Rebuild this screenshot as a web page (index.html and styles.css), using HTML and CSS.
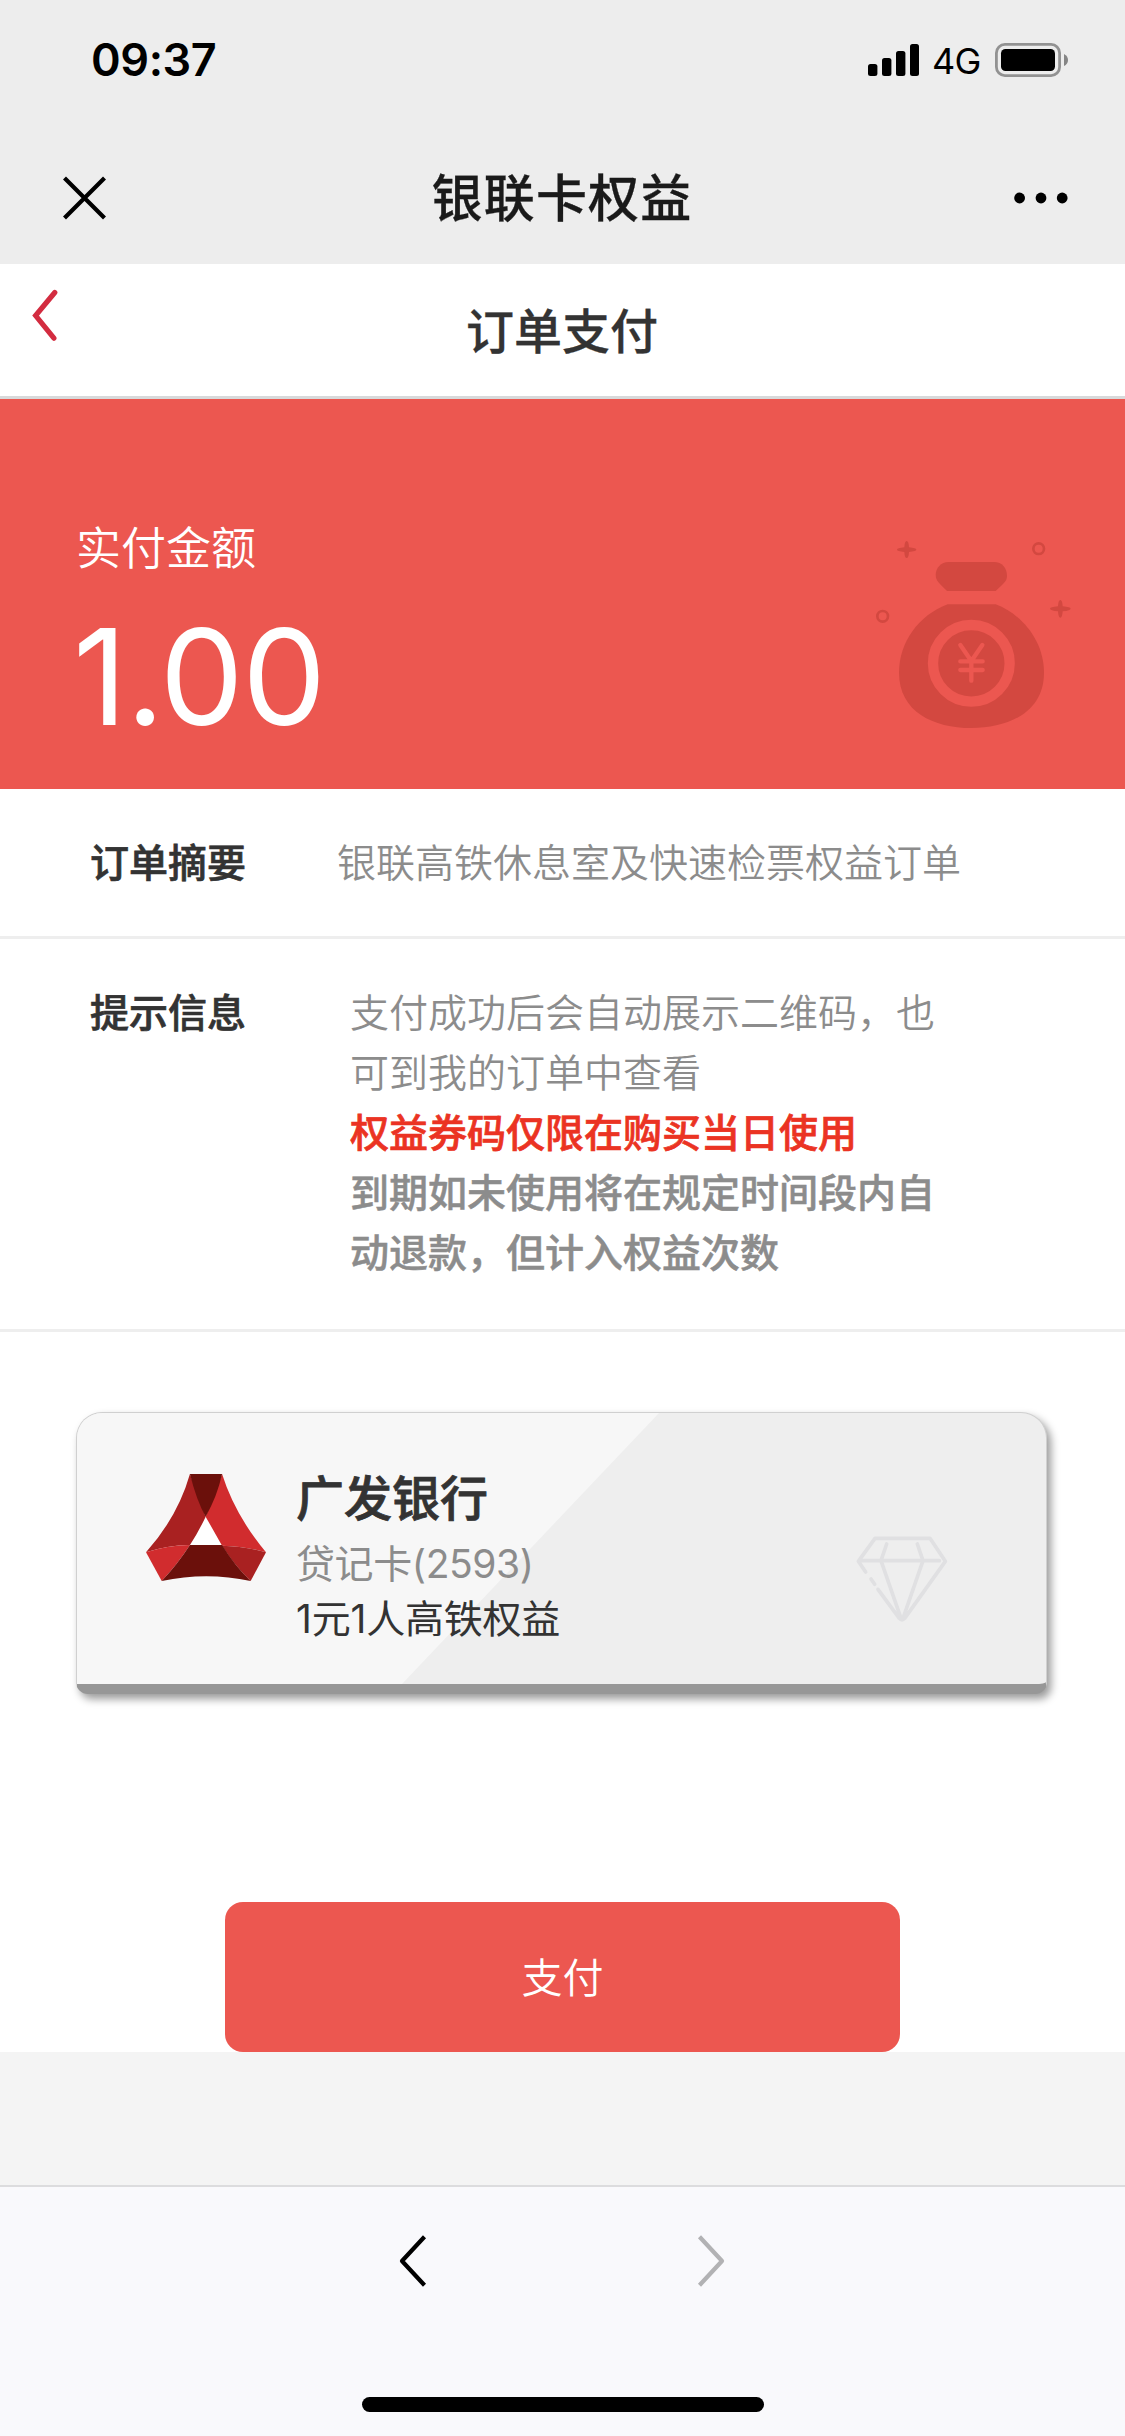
FILE: index.html
```html
<!DOCTYPE html>
<html lang="zh-CN">
<head>
<meta charset="utf-8">
<meta name="viewport" content="width=device-width, initial-scale=1">
<title>银联卡权益</title>
<link rel="stylesheet" href="styles.css">
</head>
<body>
<div class="screen">
  <header class="topbar">
    <div class="status">
      <span class="time">09:37</span>
      <div class="status-right">
        <svg class="signal" width="51" height="32" viewBox="0 0 51 32"><rect x="0" y="20" width="9.4" height="12" rx="2.5"/><rect x="14" y="14" width="9.4" height="18" rx="2.5"/><rect x="28" y="7" width="9.4" height="25" rx="2.5"/><rect x="42" y="0" width="9" height="32" rx="2.5"/></svg>
        <span class="network">4G</span>
        <svg class="battery" width="74" height="34" viewBox="0 0 74 34"><rect x="1.4" y="1.4" width="63.2" height="31.2" rx="8.5" fill="none" stroke="#929292" stroke-width="2.8"/><rect x="6" y="6" width="54" height="22" rx="4.5"/><path d="M69 11q4 2 4 6t-4 6z" fill="#858585"/></svg>
      </div>
    </div>
    <div class="navbar">
      <svg class="close" width="44" height="44" viewBox="0 0 44 44"><path d="M2.5 2l40 40M42.5 2l-40 40" stroke="#000" stroke-width="4.2"/></svg>
      <h1 class="app-title">银联卡权益</h1>
      <svg class="more" width="54" height="12" viewBox="0 0 54 12"><circle cx="5.6" cy="6" r="5.4"/><circle cx="27" cy="6" r="5.4"/><circle cx="48.2" cy="6" r="5.4"/></svg>
    </div>
  </header>

  <div class="page-head">
    <svg class="back" width="26" height="53" viewBox="0 0 26 53"><path d="M22.8 3.5L3.6 26.6l18.3 22.6" fill="none" stroke="#d32c40" stroke-width="5.2" stroke-linecap="round"/></svg>
    <h2 class="page-title">订单支付</h2>
  </div>

  <section class="amount">
    <div class="amount-text">
      <div class="amount-label">实付金额</div>
      <div class="amount-value">1.00</div>
    </div>
    <svg class="bag" width="240" height="240" viewBox="0 0 720 720" fill="#d34840">
      <path d="M296 156H432C456 156 471 174 471 198C471 210 464 217 456 225L437 243H291L272 224C263 215 257 208 257 195C257 174 273 156 296 156Z"/>
      <path d="M293 283H437C520 315 582 396 582 488C582 605 478 654 364 654C250 654 147 605 147 488C147 396 207 315 293 283Z"/>
      <circle cx="364" cy="460" r="115" fill="none" stroke="#ec5750" stroke-width="31"/>
      <path d="M331 405L364 453L397 405M331 454H398M331 480H398M364 454V512" fill="none" stroke="#ec5750" stroke-width="13" stroke-linecap="round" stroke-linejoin="round"/>
      <circle cx="566" cy="116" r="16" fill="none" stroke="#d34840" stroke-width="8"/>
      <circle cx="98" cy="319" r="16" fill="none" stroke="#d34840" stroke-width="8"/>
      <path d="M170 93Q176 93 177 112Q199 114 199 119Q199 123 177 126Q176 144 170 144Q164 144 163 126Q141 123 141 119Q141 114 163 112Q164 93 170 93Z"/>
      <path d="M631 270Q637 270 638 289Q662 291 662 296Q662 301 638 304Q637 323 631 323Q625 323 624 304Q600 301 600 296Q600 291 624 289Q625 270 631 270Z"/>
    </svg>
  </section>

  <section class="row summary">
    <div class="row-label">订单摘要</div>
    <div class="row-text">银联高铁休息室及快速检票权益订单</div>
  </section>

  <section class="row notice">
    <div class="row-label">提示信息</div>
    <div class="row-text">
      <p>支付成功后会自动展示二维码，也可到我的订单中查看</p>
      <p class="warn">权益券码仅限在购买当日使用</p>
      <p class="strong">到期如未使用将在规定时间段内自动退款，但计入权益次数</p>
    </div>
  </section>

  <section class="pay">
    <div class="card">
      <svg class="bank-logo" width="120" height="107" viewBox="241 252 336 321" preserveAspectRatio="none">
        <path d="M408 380L364 466H454Z" fill="#fff"/>
        <path d="M364 252Q330 380 241 487Q300 466 364 465Q388 426 408 380Z" fill="#a92121"/>
        <path d="M454 252Q490 375 577 487Q520 469 454 467L408 380Z" fill="#d12c2e"/>
        <path d="M364 252H454Q440 320 408 380Q382 330 364 252Z" fill="#6b100b"/>
        <path d="M241 487Q300 466 364 465Q330 522 285 573Z" fill="#d12c2e"/>
        <path d="M577 487L534 573Q490 528 454 467Q520 469 577 487Z" fill="#a92121"/>
        <path d="M364 465H454Q490 528 534 573Q410 545 285 573Q330 522 364 465Z" fill="#6b100b"/>
      </svg>
      <div class="card-info">
        <div class="bank-name">广发银行</div>
        <div class="card-type">贷记卡(2593)</div>
        <div class="card-benefit">1元1人高铁权益</div>
      </div>
      <svg class="diamond" width="96" height="90" viewBox="760 430 288 270" fill="none" stroke="#e0e0e2" stroke-width="11" stroke-linecap="round" stroke-linejoin="round">
        <path d="M795 544L773 512L823 443H988L1034 512L912 683Q904 692 896 683L832 596M811 565L822 581M778 510H1016M858 460L841 510L901 683M950 460L967 510L907 683"/>
      </svg>
    </div>
    <button class="pay-button" type="button">支付</button>
  </section>

  <div class="filler"></div>

  <footer class="toolbar">
    <div class="toolbar-nav">
      <svg width="28" height="52" viewBox="0 0 28 52"><path d="M25.5 1.8L3 26l22.5 24.2" fill="none" stroke="#000" stroke-width="4.2" stroke-linejoin="round"/></svg>
      <svg width="28" height="52" viewBox="0 0 28 52"><path d="M2.5 1.8L25 26 2.5 50.2" fill="none" stroke="#b2b2b4" stroke-width="4.2" stroke-linejoin="round"/></svg>
    </div>
    <div class="home-indicator"></div>
  </footer>
</div>
</body>
</html>
```
FILE: styles.css
```css
* {
  box-sizing: border-box;
  margin: 0;
  padding: 0;
}

body {
  background: #fff;
  color: #333;
  font-family: "Noto Sans CJK SC", sans-serif;
}

svg {
  display: block;
  flex: none;
}

.screen {
  width: 1125px;
  height: 2436px;
  display: flex;
  flex-direction: column;
  overflow: hidden;
}

/* Status bar and app navigation */
.topbar {
  height: 264px;
  background: #ededed;
  color: #000;
}

.status {
  height: 132px;
  padding: 0 56px 12px 91px;
  display: flex;
  align-items: center;
  justify-content: space-between;
  font-family: Inter, sans-serif;
}

.time {
  font-size: 45px;
  font-weight: 600;
  line-height: 54px;
  letter-spacing: -0.4px;
}

.status-right {
  display: flex;
  align-items: center;
}

.network {
  width: 76px;
  padding: 2px 0 0 13px;
  font-size: 36px;
  line-height: 40px;
  letter-spacing: -0.8px;
}

.navbar {
  height: 132px;
  padding: 0 57px 0 62px;
  display: grid;
  grid-template-columns: 1fr auto 1fr;
  align-items: center;
}

.more {
  justify-self: end;
}

.app-title {
  margin-right: 6px;
  padding-bottom: 6px;
  font-size: 51px;
  font-weight: 500;
  line-height: 60px;
  letter-spacing: 1.2px;
  color: #1a1a1a;
  -webkit-text-stroke: 0.3px;
}

/* Page heading */
.page-head {
  height: 135px;
  padding: 25px 32px 0;
  border-bottom: 3px solid #d8d9da;
  display: grid;
  grid-template-columns: 1fr auto 1fr;
  align-items: start;
}

.page-title {
  margin-right: 1px;
  padding-top: 9px;
  font-size: 48px;
  font-weight: 500;
  line-height: 60px;
  -webkit-text-stroke: 0.3px;
}

/* Amount banner */
.amount {
  height: 390px;
  padding: 111px 35px 0 76px;
  background: #ec5750;
  color: #fff;
  display: flex;
  justify-content: space-between;
}

.amount-label {
  padding-top: 6px;
  font-size: 45px;
  font-weight: 350;
  line-height: 60px;
}

.amount-value {
  font-family: Inter, sans-serif;
  font-size: 133px;
  font-weight: 400;
  line-height: 140px;
  letter-spacing: -1.2px;
  margin: 31px 0 0 -3px;
}

/* Order rows */
.row {
  padding-left: 90px;
  border-bottom: 3px solid #eee;
  display: flex;
  font-size: 39px;
  line-height: 60px;
}

.row-label {
  font-weight: 500;
  -webkit-text-stroke: 0.7px;
}

.row-text {
  color: #8c8c8c;
  font-weight: 350;
}

.summary {
  height: 150px;
  padding-top: 41px;
  gap: 91px;
}

.notice {
  height: 393px;
  padding-top: 41px;
  gap: 104px;
}

.notice .row-text {
  width: 590px;
}

.notice .warn {
  color: #eb3323;
  font-weight: 500;
  -webkit-text-stroke: 0.7px;
}

.notice .strong {
  font-weight: 500;
  -webkit-text-stroke: 0.5px;
}

/* Bank card */
.pay {
  height: 720px;
  padding-top: 80px;
  display: flex;
  flex-direction: column;
  align-items: center;
  justify-content: space-between;
}

.card {
  position: relative;
  width: 971px;
  height: 282px;
  margin-left: -2px;
  padding: 61px 96px 0 69px;
  border: 1px solid #d0d0d0;
  border-bottom: 10px solid #979797;
  border-radius: 26px 26px 12px 12px;
  background: #eee;
  box-shadow: 4px 5px 8px rgba(0, 0, 0, 0.4);
  display: flex;
  align-items: flex-start;
}

.card::before {
  content: "";
  position: absolute;
  inset: 0;
  border-radius: 25px 0 0 0;
  background: #f7f7f7;
  clip-path: polygon(0 0, 582px 0, 325px 100%, 0 100%);
}

.card > * {
  position: relative;
}

.card-info {
  flex: 1;
  padding-left: 30px;
  margin-top: -5px;
  font-family: Inter, "Noto Sans CJK SC", sans-serif;
  font-size: 39px;
  line-height: 55px;
}

.bank-name {
  font-size: 48px;
  font-weight: 500;
  line-height: 60px;
  margin-bottom: 7px;
  -webkit-text-stroke: 0.8px;
}

.card-type {
  color: #8c8c8c;
  letter-spacing: -0.4px;
}

.card-benefit {
  letter-spacing: -0.2px;
}

.diamond {
  margin-top: 60px;
}

.pay-button {
  width: 675px;
  height: 150px;
  padding-bottom: 5px;
  border: 0;
  border-radius: 18px;
  background: #ec5750;
  color: #fff;
  font: 350 41px/60px "Noto Sans CJK SC", sans-serif;
}

.filler {
  flex: 1;
  background: #f4f4f4;
}

/* Browser toolbar */
.toolbar {
  height: 251px;
  padding: 48px 0 24px;
  border-top: 2px solid #dcdcde;
  background: #f9f9fc;
  display: flex;
  flex-direction: column;
  align-items: center;
  justify-content: space-between;
}

.toolbar-nav {
  display: flex;
  gap: 270px;
  margin-right: 1px;
}

.home-indicator {
  width: 402px;
  height: 15px;
  border-radius: 8px;
  background: #000;
}
```
